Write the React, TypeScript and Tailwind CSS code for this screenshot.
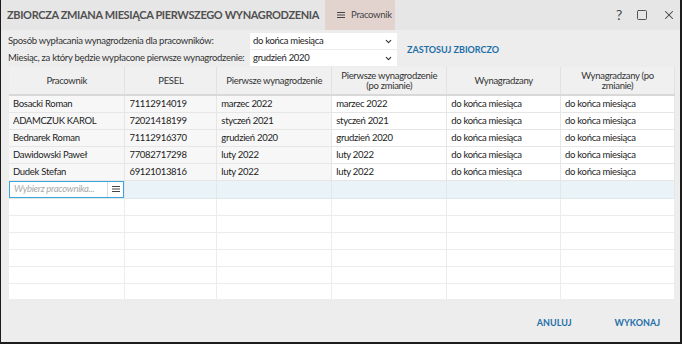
import { ChevronDown, X, Square } from "lucide-react";

const rows = [
  ["Bosacki Roman", "71112914019", "marzec 2022", "marzec 2022", "do końca miesiąca", "do końca miesiąca"],
  ["ADAMCZUK KAROL", "72021418199", "styczeń 2021", "styczeń 2021", "do końca miesiąca", "do końca miesiąca"],
  ["Bednarek Roman", "71112916370", "grudzień 2020", "grudzień 2020", "do końca miesiąca", "do końca miesiąca"],
  ["Dawidowski Paweł", "77082717298", "luty 2022", "luty 2022", "do końca miesiąca", "do końca miesiąca"],
  ["Dudek Stefan", "69121013816", "luty 2022", "luty 2022", "do końca miesiąca", "do końca miesiąca"],
];

const cols = [116, 92, 115, 115, 114, 114];

function Burger() {
  return (
    <svg width="8" height="8" viewBox="0 0 8 8" className="text-[#444]">
      <rect x="0" y="1" width="8" height="1" fill="currentColor" />
      <rect x="0" y="3.5" width="8" height="1" fill="currentColor" />
      <rect x="0" y="6" width="8" height="1" fill="currentColor" />
    </svg>
  );
}

function Select({ value }: { value: string }) {
  return (
    <div className="flex h-[16px] w-[147px] items-center justify-between bg-white pl-[3px] pr-[4px] text-[#222]">
      <span>{value}</span>
      <ChevronDown size={9} strokeWidth={3} className="text-[#333]" />
    </div>
  );
}

export default function App() {
  return (
    <div
      className="flex h-[344px] w-[682px] flex-col border-b-2 border-l border-r-2 border-[#1c1c1c] bg-[#ededed] text-[9.5px] tracking-[-0.3px] whitespace-nowrap text-[#333]"
      style={{ fontFamily: "Lato, 'Open Sans', sans-serif" }}
    >
      {/* title bar */}
      <div className="flex h-[30px] shrink-0 items-stretch bg-[#e6e6e6]">
        <div className="flex items-center pl-[6px] pr-[6px] text-[11px] font-bold tracking-[-0.35px] text-[#505050]">
          ZBIORCZA ZMIANA MIESIĄCA PIERWSZEGO WYNAGRODZENIA
        </div>
        <div className="flex w-[70px] items-center gap-[6px] bg-[#e2d3cf] pl-[12px] text-[9.5px] text-[#444]">
          <Burger />
          <span>Pracownik</span>
        </div>
        <div className="ml-auto flex items-center gap-[13px] pr-[4px] text-[#444]">
          <span className="text-[14px] leading-none">?</span>
          <Square size={12} strokeWidth={1.8} className="mx-[1px]" />
          <X size={14} strokeWidth={1.8} />
        </div>
      </div>

      {/* filters */}
      <div className="flex items-center pl-[7px] pt-[3px]">
        <div className="flex flex-col gap-[1px]">
          <div className="flex h-[16px] items-center">
            <span className="w-[242px]">Sposób wypłacania wynagrodzenia dla pracowników:</span>
            <Select value="do końca miesiąca" />
          </div>
          <div className="flex h-[16px] items-center">
            <span className="w-[242px]">Miesiąc, za który będzie wypłacone pierwsze wynagrodzenie:</span>
            <Select value="grudzień 2020" />
          </div>
        </div>
        <span className="ml-[10px] text-[9px] font-bold tracking-normal text-[#1e6fa8]">ZASTOSUJ ZBIORCZO</span>
      </div>

      {/* table */}
      <div className="mx-[8px] mt-[1px] h-[232px] w-[666px] bg-white">
        <table className="table-fixed border-collapse">
          <colgroup>
            {cols.map((w, i) => (
              <col key={i} style={{ width: w }} />
            ))}
          </colgroup>
          <thead>
            <tr className="h-[28px] bg-[#f0f0f0]">
              {[
                ["Pracownik"],
                ["PESEL"],
                ["Pierwsze wynagrodzenie"],
                ["Pierwsze wynagrodzenie", "(po zmianie)"],
                ["Wynagradzany"],
                ["Wynagradzany (po", "zmianie)"],
              ].map((h, i) => (
                <th
                  key={i}
                  className="border-b-2 border-r border-b-[#d8d8d8] border-r-[#e2e2e2] px-[4px] text-center font-normal leading-[10px] text-[#333]"
                >
                  {h.map((l, k) => (
                    <div key={k}>{l}</div>
                  ))}
                </th>
              ))}
            </tr>
          </thead>
          <tbody>
            {rows.map((r, i) => (
              <tr key={i} className="h-[17px]">
                {r.map((c, j) => (
                  <td
                    key={j}
                    className={`border-b border-r border-[#e6e6e6] px-[4px] leading-none text-[#222] ${j < 3 ? "bg-[#f7f7f7]" : "bg-white"}`}
                  >
                    {c}
                  </td>
                ))}
              </tr>
            ))}
            <tr className="h-[17px] bg-[#eaf4f8]">
              <td className="border-b border-r border-[#e6e6e6] p-0">
                <div className="flex h-[17px] items-center justify-between border border-[#3aa6dc] bg-white pl-[4px] pr-[3px]">
                  <span className="italic text-[#a9a9a9]">Wybierz pracownika...</span>
                  <div className="flex h-full items-center border-l border-[#dcdcdc] pl-[4px]">
                    <Burger />
                  </div>
                </div>
              </td>
              {[1, 2, 3, 4, 5].map((j) => (
                <td key={j} className="border-b border-r border-[#e1e8ec]" />
              ))}
            </tr>
            {[0, 1, 2, 3, 4, 5].map((i) => (
              <tr key={i} className="h-[17px]">
                {cols.map((_, j) => (
                  <td key={j} className="border-b border-r border-[#ececec]" />
                ))}
              </tr>
            ))}
          </tbody>
        </table>
      </div>

      {/* footer */}
      <div className="flex flex-1 items-center justify-end gap-[43px] pr-[20px] pt-[5px] text-[9px] font-bold tracking-normal text-[#1e6fa8]">
        <span>ANULUJ</span>
        <span>WYKONAJ</span>
      </div>
    </div>
  );
}
